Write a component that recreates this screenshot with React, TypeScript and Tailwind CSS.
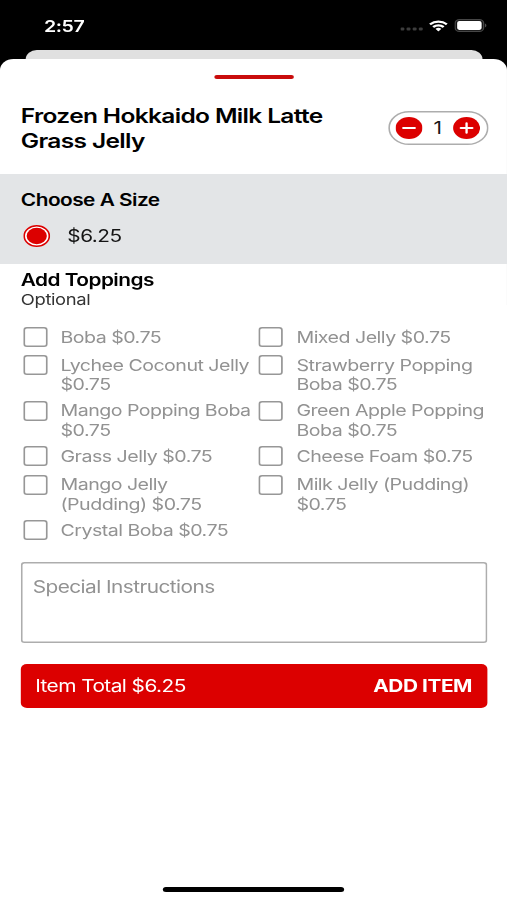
const rows: [string, string?][] = [
  ["Boba $0.75", "Mixed Jelly $0.75"],
  ["Lychee Coconut Jelly\n$0.75", "Strawberry Popping\nBoba $0.75"],
  ["Mango Popping Boba\n$0.75", "Green Apple Popping\nBoba $0.75"],
  ["Grass Jelly $0.75", "Cheese Foam $0.75"],
  ["Mango Jelly\n(Pudding) $0.75", "Milk Jelly (Pudding)\n$0.75"],
  ["Crystal Boba $0.75"],
];

function Topping({ label }: { label: string }) {
  return (
    <label className="flex w-[192.7px] shrink-0 items-start">
      <span className="h-5 w-5 shrink-0 rounded-[3px] shadow-[inset_0_0_0_1.5px_#979797]" />
      <span className="ml-[10.6px] whitespace-pre pt-[0.8px] text-[16px] leading-[19.4px] tracking-[-0.42px] text-[#929292]">
        {label}
      </span>
    </label>
  );
}

function RoundButton({ d, label }: { d: string; label: string }) {
  return (
    <button aria-label={label} className="h-[22px] w-[22px]">
      <svg viewBox="0 0 22 22" className="block h-full w-full">
        <circle cx="11" cy="11" r="11" fill="#dc0000" />
        <path d={d} stroke="#fff" strokeWidth="1.9" strokeLinecap="round" />
      </svg>
    </button>
  );
}

function StatusIcons() {
  return (
    <div className="flex items-center">
      <svg viewBox="0 0 20 4" className="mt-[7px] h-[4px] w-[20px]" fill="#3d3d3d">
        <rect x="0" y="0.4" width="3.2" height="3.2" rx="1" />
        <rect x="5" y="0.4" width="3.2" height="3.2" rx="1" />
        <rect x="10" y="0.4" width="3.2" height="3.2" rx="1" />
        <rect x="15" y="0.4" width="3.2" height="3.2" rx="1" />
      </svg>
      <svg viewBox="0 0 17 12" className="ml-[3px] h-[12px] w-[16px]" fill="#fff">
        <path d="M8.5 2.5c2.4 0 4.6.9 6.3 2.5.1.1.3.1.4 0l1.2-1.3c.1-.1.1-.3 0-.4A11.4 11.4 0 0 0 .6 3.3c-.1.1-.1.3 0 .4L1.8 5c.1.1.3.1.4 0A9.2 9.2 0 0 1 8.5 2.5z" />
        <path d="M8.5 6.5c1.3 0 2.5.5 3.5 1.3.1.1.3.1.4 0l1.2-1.3c.1-.1.1-.3 0-.4a7.5 7.5 0 0 0-10.2 0c-.1.1-.1.3 0 .4l1.2 1.3c.1.1.3.1.4 0 1-.8 2.2-1.3 3.5-1.3z" />
        <path d="M10.9 9.3c.1-.1.1-.3 0-.4a3.7 3.7 0 0 0-4.8 0c-.1.1-.1.3 0 .4l2.2 2.2c.1.1.3.1.4 0z" />
      </svg>
      <svg viewBox="0 0 27 13" className="ml-[5px] h-[13px] w-[27px]">
        <rect x="0.7" y="0.6" width="23.2" height="11.8" rx="3.5" fill="#111" stroke="#464646" strokeWidth="1.1" />
        <rect x="2.3" y="2.1" width="20" height="8.8" rx="1.8" fill="#fff" />
        <path d="M25 4.6c1.6.7 1.6 3.1 0 3.8z" fill="#505050" />
      </svg>
    </div>
  );
}

export default function App() {
  return (
    <div className="h-[900px] w-[507px] overflow-hidden bg-black font-['Inter','Liberation_Sans',sans-serif] text-[#151515]">
      <div className="flex h-[900px] w-[414px] origin-top-left scale-x-[1.2246] flex-col">
        <header className="flex h-[49.5px] shrink-0 items-start justify-between pl-9 pr-[16.2px] pt-[15px] text-white">
          <span className="text-[16px] font-semibold leading-[22px] tracking-[-0.4px]">2:57</span>
          <div className="pt-[4px]">
            <StatusIcons />
          </div>
        </header>
        <div className="ml-[21px] mr-[20px] h-[9.5px] shrink-0 rounded-t-[9px] bg-[#e0e0e0]" />
        <main className="flex grow flex-col rounded-t-[11px] bg-white">
          <div className="mx-auto mt-4 h-[4px] w-[65px] shrink-0 rounded-full bg-[#c90c0c]" />
          <section className="flex h-[94.5px] shrink-0 items-start justify-between pl-[17px] pr-[15.5px]">
            <h1 className="mt-[24.6px] whitespace-pre text-[20px] font-semibold leading-[25px] tracking-[-0.53px] text-black">
              {"Frozen Hokkaido Milk Latte\nGrass Jelly"}
            </h1>
            <div className="mt-[32px] flex h-[33.5px] w-[82px] items-center justify-between rounded-full px-[6px] shadow-[inset_0_0_0_1.4px_#adadad]">
              <RoundButton label="Decrease" d="M6.3 11H15.7" />
              <span className="pt-[1px] text-[17px]">1</span>
              <RoundButton label="Increase" d="M6.3 11H15.7M11 6.3V15.7" />
            </div>
          </section>
          <section className="h-[90.5px] shrink-0 bg-[#e3e5e7] px-[17px] pt-[15px]">
            <h2 className="text-[17px] font-semibold leading-[22px] tracking-[-0.42px] text-black">Choose A Size</h2>
            <label className="mt-[14px] flex items-center">
              <svg viewBox="0 0 24 24" className="ml-[1.6px] h-[22px] w-[22px]">
                <circle cx="12" cy="12" r="11.2" fill="#fff" stroke="#dc0000" strokeWidth="1.5" />
                <circle cx="12" cy="12" r="9" fill="#dc0000" />
              </svg>
              <span className="ml-[14.4px] text-[17px] leading-[22px] tracking-[-0.42px]">$6.25</span>
            </label>
          </section>
          <section className="px-[17px] pt-[4.5px]">
            <h2 className="text-[17px] font-semibold leading-[22px] tracking-[-0.44px] text-black">Add Toppings</h2>
            <p className="text-[15px] leading-[18px] tracking-[-0.3px] text-[#333]">Optional</p>
            <div className="ml-[1.8px] mt-[18.3px] flex h-[235.7px] flex-col">
              {rows.map((row) => (
                <div key={row[0]} className={row[0].includes("\n") ? "flex h-[45.7px]" : "flex h-[28.2px]"}>
                  {row.map((label) => label && <Topping key={label} label={label} />)}
                </div>
              ))}
            </div>
            <textarea
              placeholder="Special Instructions"
              className="-ml-[0.3px] block h-[80.5px] w-[381.3px] resize-none rounded-[3px] px-[10px] pt-[13.3px] text-[17px] leading-[22px] tracking-[-0.46px] shadow-[inset_0_0_0_1.4px_#adadad] outline-none placeholder:text-[#929292]"
            />
            <button className="-ml-[0.3px] mt-[20.8px] flex h-[44px] w-[381.3px] items-center justify-between rounded-[5px] bg-[#dc0000] pl-3 pr-[12.5px] pt-[2px] text-[17px] text-white">
              <span className="tracking-[-0.45px]">Item Total $6.25</span>
              <span className="font-bold tracking-[-0.35px]">ADD ITEM</span>
            </button>
          </section>
          <div className="mx-auto mb-2 mt-auto h-[5px] w-[148px] rounded-full bg-black" />
        </main>
      </div>
    </div>
  );
}
